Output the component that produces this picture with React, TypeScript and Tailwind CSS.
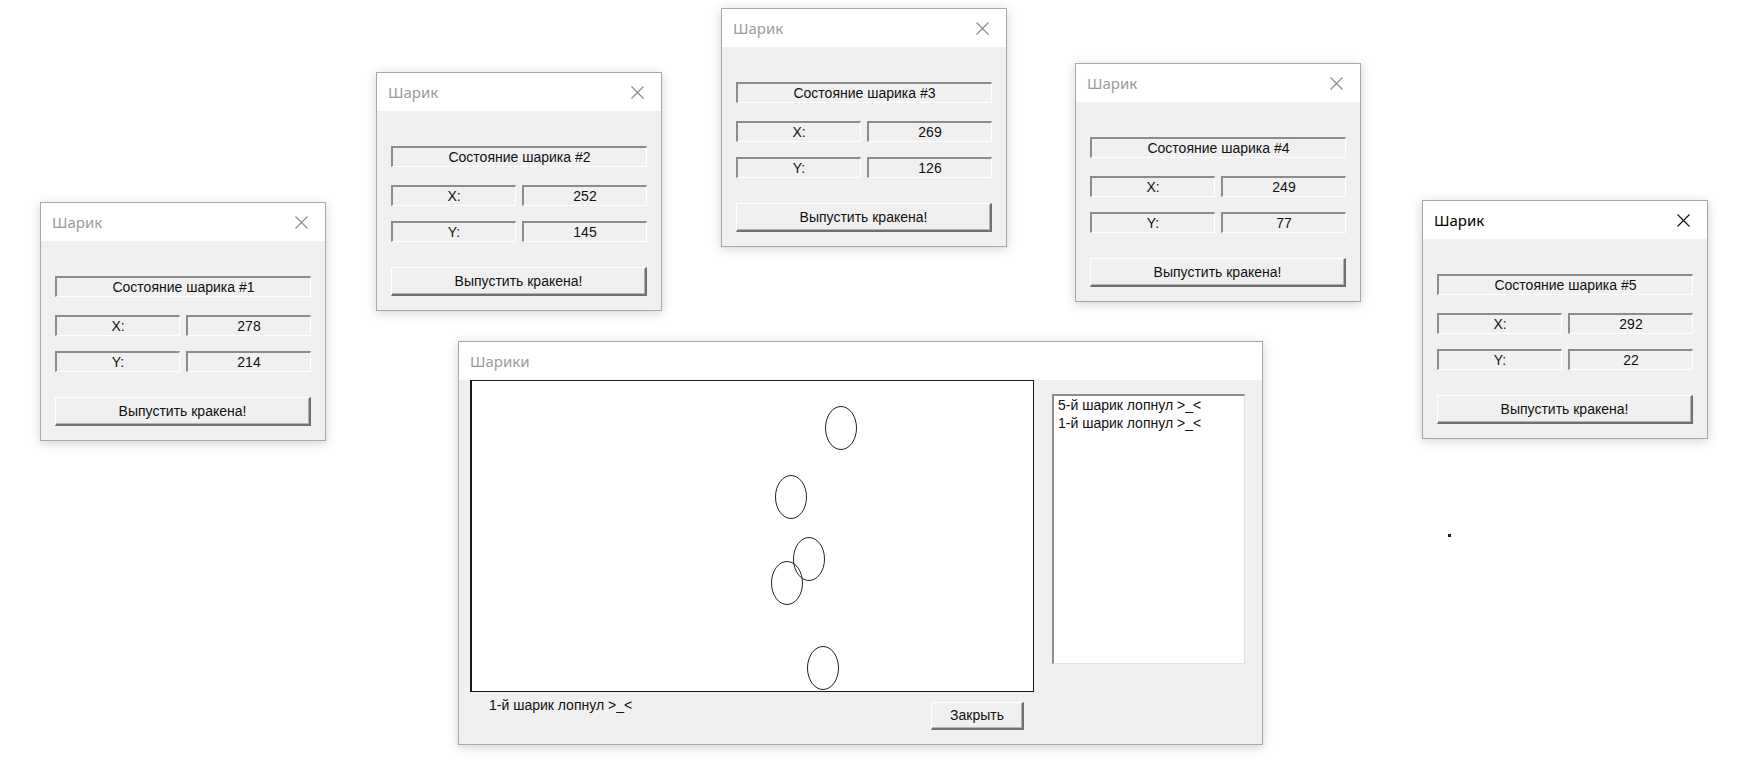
import type { ReactNode } from 'react';

const FONT = "font-['Liberation_Sans',Arial,sans-serif]";

interface WinProps {
  pos: string;
  width: string;
  title: string;
  active?: boolean;
  closable?: boolean;
  children: ReactNode;
}

function Win({ pos, width, title, active = false, closable = true, children }: WinProps): JSX.Element {
  return (
    <div
      className={`absolute ${pos} ${width} border border-[#a8a8a8] bg-[#f0f0f0] shadow-[0_2px_10px_rgba(0,0,0,0.18)]`}
    >
      <div className="flex h-[38px] items-center justify-between bg-white pl-[11px] pr-[16px]">
        <span
          className={`font-['Noto_Sans','Open_Sans',sans-serif] text-[15px] ${active ? 'text-black' : 'text-[#9b9b9b]'}`}
        >
          {title}
        </span>
        {closable && (
          <svg width="13" height="13" viewBox="0 0 13 13" className="mr-[1px]">
            <path
              d="M0.5 0.5 L12.5 12.5 M12.5 0.5 L0.5 12.5"
              stroke={active ? '#111' : '#8a8a8a'}
              strokeWidth="1.1"
              fill="none"
            />
          </svg>
        )}
      </div>
      {children}
    </div>
  );
}

function Sunken({ children }: { children: ReactNode }): JSX.Element {
  return (
    <div className="flex h-[21px] items-center justify-center border-t-2 border-l-2 border-r border-b border-t-[#8c8c8c] border-l-[#8c8c8c] border-r-white border-b-white text-[14px] text-[#111]">
      {children}
    </div>
  );
}

function Button({ label, size }: { label: string; size: string }): JSX.Element {
  return (
    <div
      className={`flex ${size} items-center justify-center border-t border-l border-r-2 border-b-2 border-t-white border-l-white border-r-[#707070] border-b-[#707070] bg-[#f0f0f0] text-[14px] text-[#111] shadow-[inset_-1px_-1px_0_#b4b4b4]`}
    >
      {label}
    </div>
  );
}

interface Ball {
  n: number;
  x: number;
  y: number;
  pos: string;
  active?: boolean;
}

const balls: Ball[] = [
  { n: 1, x: 278, y: 214, pos: 'left-[40px] top-[202px]' },
  { n: 2, x: 252, y: 145, pos: 'left-[376px] top-[72px]' },
  { n: 3, x: 269, y: 126, pos: 'left-[721px] top-[8px]' },
  { n: 4, x: 249, y: 77, pos: 'left-[1075px] top-[63px]' },
  { n: 5, x: 292, y: 22, pos: 'left-[1422px] top-[200px]', active: true },
];

// ellipse centres, relative to the canvas inner corner
const shapes = [
  { cx: 369, cy: 47 },
  { cx: 319, cy: 116 },
  { cx: 337, cy: 178 },
  { cx: 315, cy: 202 },
  { cx: 351, cy: 287 },
];

function BallWindow({ ball }: { ball: Ball }): JSX.Element {
  return (
    <Win pos={ball.pos} width="w-[286px]" title="Шарик" active={ball.active}>
      <div className={`flex flex-col px-[14px] pt-[35px] pb-[14px] ${FONT}`}>
        <Sunken>Состояние шарика #{ball.n}</Sunken>
        <div className="mt-[18px] grid grid-cols-2 gap-[6px]">
          <Sunken>X:</Sunken>
          <Sunken>{ball.x}</Sunken>
        </div>
        <div className="mt-[15px] grid grid-cols-2 gap-[6px]">
          <Sunken>Y:</Sunken>
          <Sunken>{ball.y}</Sunken>
        </div>
        <div className="mt-[25px]">
          <Button label="Выпустить кракена!" size="h-[29px] w-full" />
        </div>
      </div>
    </Win>
  );
}

export default function App(): JSX.Element {
  return (
    <div className="relative h-[765px] w-[1743px] overflow-hidden bg-white">
      {balls.map((b) => (
        <BallWindow key={b.n} ball={b} />
      ))}

      <Win pos="left-[458px] top-[341px]" width="w-[805px]" title="Шарики" closable={false}>
        <div className={`flex pl-[11px] pb-[14px] ${FONT}`}>
          <div className="flex w-[564px] flex-col">
            <div className="relative h-[312px] w-[564px] border border-l-2 border-[#1a1a1a] bg-white">
              <svg className="absolute inset-0" width="562" height="310">
                {shapes.map((s, i) => (
                  <ellipse
                    key={i}
                    cx={s.cx}
                    cy={s.cy}
                    rx="15.5"
                    ry="21.5"
                    fill="none"
                    stroke="#222"
                    strokeWidth="1"
                  />
                ))}
              </svg>
            </div>
            <div className="flex items-start justify-between pl-[19px] pr-[10px]">
              <span className="mt-[5px] text-[14px] leading-[16px] text-[#111]">1-й шарик лопнул &gt;_&lt;</span>
              <div className="mt-[10px]">
                <Button label="Закрыть" size="h-[28px] w-[93px]" />
              </div>
            </div>
          </div>
          <div className="ml-[18px] mt-[14px] h-[270px] w-[193px] border-t-2 border-l-2 border-r border-b border-t-[#8c8c8c] border-l-[#8c8c8c] border-r-[#e3e3e3] border-b-[#e3e3e3] bg-white px-[4px] text-[14px] leading-[18px] text-[#111]">
            <div>5-й шарик лопнул &gt;_&lt;</div>
            <div>1-й шарик лопнул &gt;_&lt;</div>
          </div>
        </div>
      </Win>

      <div className="absolute left-[1448px] top-[534px] h-[3px] w-[3px] bg-[#222]" />
    </div>
  );
}
